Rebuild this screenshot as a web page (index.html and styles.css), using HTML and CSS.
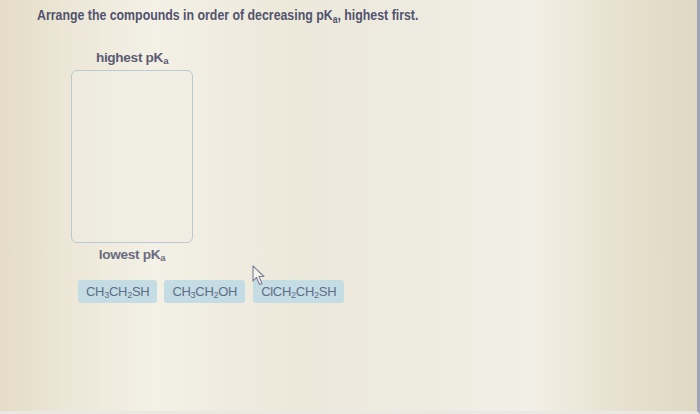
FILE: index.html
```html
<!DOCTYPE html>
<html lang="en">
<head>
    <meta charset="UTF-8">
    <meta name="viewport" content="width=device-width, initial-scale=1.0">
    <title>Ranking</title>
    <link rel="stylesheet" href="styles.css">
</head>
<body>
    <main class="screen">
        <h1 class="prompt">Arrange the compounds in order of decreasing p<i>K</i><sub>a</sub>, highest first.</h1>

        <section class="ranker">
            <div class="rank-label">highest p<i>K</i><sub>a</sub></div>
            <div class="drop-zone"></div>
            <div class="rank-label low">lowest p<i>K</i><sub>a</sub></div>
        </section>

        <section class="tray">
            <div class="chip">CH<sub>3</sub>CH<sub>2</sub>SH</div>
            <div class="chip">CH<sub>3</sub>CH<sub>2</sub>OH</div>
            <div class="chip">ClCH<sub>2</sub>CH<sub>2</sub>SH</div>
            <!-- mouse pointer hovering the last chip -->
            <svg class="pointer" width="14" height="22" viewBox="0 0 14 22">
                <path d="M1 1 L1 16 L4.5 12.5 L7.5 19.5 L10 18.5 L7 11.5 L12 11.5 Z" fill="#f4f3ee" stroke="#7c7f96" stroke-width="1.1" stroke-linejoin="round"/>
            </svg>
        </section>
    </main>
</body>
</html>
```

FILE: styles.css
```css
html, body {
    margin: 0;
    height: 100%;
}

body {
    font-family: 'Liberation Sans', Arial, sans-serif;
    color: #55566e;
    background: #ebe5d3;
}

.screen {
    position: relative;
    box-sizing: border-box;
    height: 414px;
    padding: 6px 0 0 37px;
    background:
        linear-gradient(90deg,
            #e4dcc6 0%,
            #ece7d7 10%,
            #f3f0e5 22%,
            #ece8da 42%,
            #eeebe1 62%,
            #f2efe6 76%,
            #e8e2d0 88%,
            #dfd8c3 100%);
    border-right: 3px solid #9ea3b9;
    border-bottom: 3px solid #e9e8e2;
    overflow: hidden;
}

.prompt {
    margin: 0;
    font-size: 15px;
    line-height: 17px;
    font-weight: bold;
    color: #52536e;
    white-space: nowrap;
    /* the type on this page runs narrow */
    transform: scaleX(0.823);
    transform-origin: left center;
}

.prompt i, .rank-label i {
    font-style: normal;
}

sub {
    font-size: 0.7em;
    line-height: 0;
    vertical-align: -0.25em;
}

.ranker {
    display: flex;
    flex-direction: column;
    align-items: center;
    width: 122px;
    margin: 27px 0 0 34px;
}

.rank-label {
    font-size: 13.6px;
    font-weight: bold;
    letter-spacing: -0.3px;
    color: #5b5c74;
    height: 20px;
}

.rank-label.low {
    margin-top: 4px;
    color: #6a6b80;
}

.drop-zone {
    box-sizing: border-box;
    width: 122px;
    height: 173px;
    border: 1px solid #bcc8d6;
    border-radius: 6px;
    background: rgba(240, 237, 228, 0.5);
}

.tray {
    position: relative;
    display: flex;
    gap: 7px;
    margin: 13px 0 0 41px;
}

.chip {
    height: 23px;
    padding: 0 8px;
    line-height: 23px;
    font-size: 13px;
    letter-spacing: -0.3px;
    color: #5e6d88;
    background: #c4dce4;
    border-radius: 3px;
}

.chip:nth-child(3) {
    margin-left: 1px;
}

.pointer {
    position: absolute;
    left: 174px;
    top: -15px;
}
```
